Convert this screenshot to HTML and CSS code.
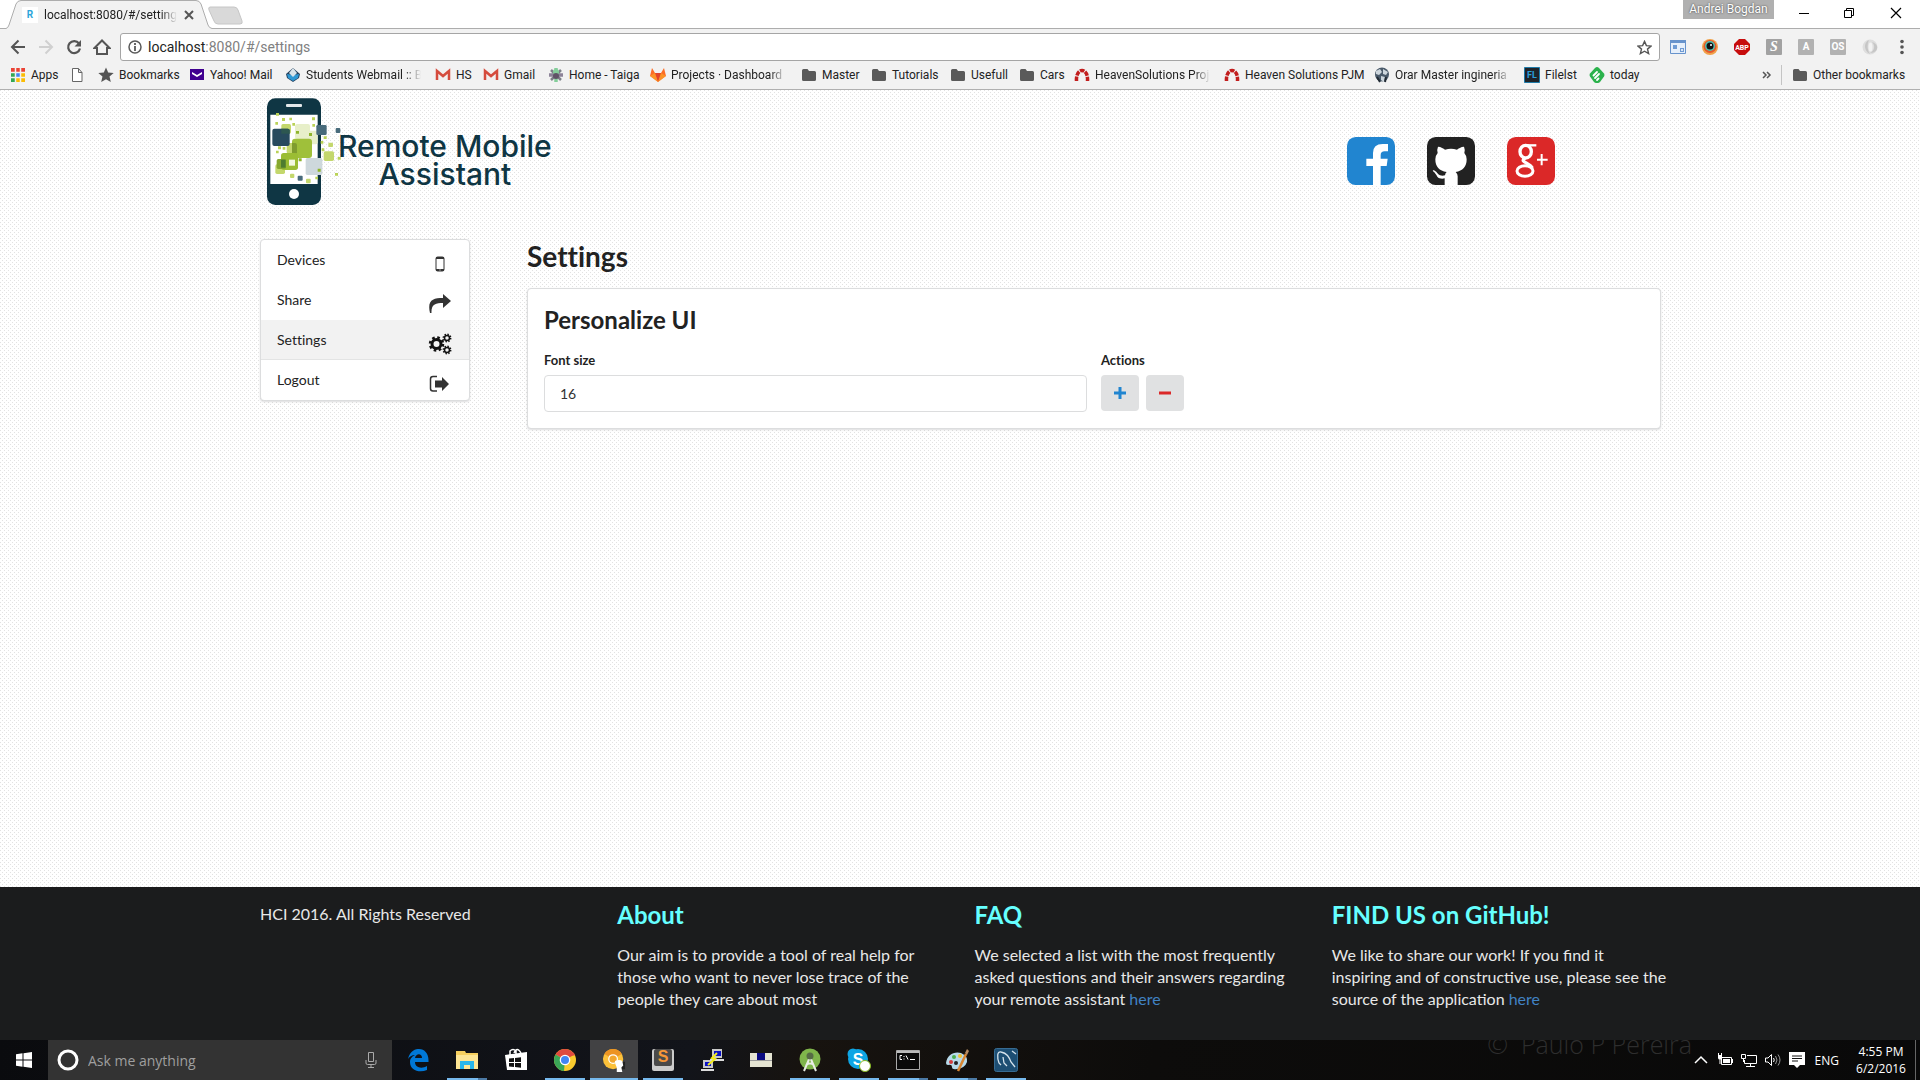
FILE: index.html
```html
<!DOCTYPE html>
<html lang="en">
<head>
<meta charset="utf-8">
<title>Remote Mobile Assistant - Settings</title>
<link rel="stylesheet" href="styles.css">
</head>
<body>
<svg class="sprite" aria-hidden="true">
  <symbol id="folder" viewBox="0 0 16 16"><path d="M1 3.500q0-1.500 1.500-1.500h4l1.500 2h5.500q1.500 0 1.500 1.500v7q0 1.500-1.500 1.500h-11q-1.500 0-1.500-1.500z" fill="#5a5a5a"/></symbol>
  <symbol id="gmail" viewBox="0 0 16 16"><path d="M2 3h12v10H2z" fill="#f2efef"/><path d="M2 13V4l6 5 6-5v9" fill="none" stroke="#d54b3d" stroke-width="2.500"/></symbol>
  <symbol id="redmine" viewBox="0 0 16 16"><path d="M2.500 14c-1-14 12-14 11 0" fill="none" stroke="#c21d1d" stroke-width="3.500" stroke-dasharray="4.500 1"/></symbol>
</svg>

<header class="browser">
  <div class="tabstrip">
    <div class="tab">
      <svg class="tab-shape" viewBox="0 0 206 29" aria-hidden="true"><path d="M0 28.500Q2 28 3 25L10 4Q11.500 .500 15 .500H190Q193.500 .500 195 4L202 25Q203 28 206 28.500V29H0z" fill="#f2f2f2"/><path d="M0 28.500Q2 28 3 25L10 4Q11.500 .500 15 .500H190Q193.500 .500 195 4L202 25Q203 28 206 28.500" fill="none" stroke="#adadad"/></svg>
      <span class="favicon">R</span>
      <span class="tab-title fade">localhost:8080/#/settings</span>
      <button class="tab-close" aria-label="Close tab"><svg width="10" height="10" viewBox="0 0 10 10"><path d="M1 1l8 8M9 1L1 9" stroke="#555" stroke-width="2"/></svg></button>
    </div>
    <button class="new-tab" aria-label="New tab"><svg width="35" height="19" viewBox="0 0 35 19"><path d="M2 1H26Q29 1 30 4L34 15Q35 18 32 18H10Q7 18 6 15L1 4Q0 1 2 1z" fill="#d9d9d9" stroke="#c6c6c6"/></svg></button>
    <div class="window-controls">
      <span class="profile">Andrei Bogdan</span>
      <button aria-label="Minimize"><svg width="12" height="12" viewBox="0 0 12 12"><path d="M1 6.500h10" stroke="#000"/></svg></button>
      <button aria-label="Restore"><svg width="12" height="12" viewBox="0 0 12 12" fill="none" stroke="#000"><path d="M1.500 3.500h7v7h-7zM3.500 3V1.500h7v7H9"/></svg></button>
      <button aria-label="Close"><svg width="12" height="12" viewBox="0 0 12 12"><path d="M1 1l10 10M11 1L1 11" stroke="#000" stroke-width="1.200"/></svg></button>
    </div>
  </div>

  <div class="toolbar">
    <button aria-label="Back"><svg width="16" height="16" viewBox="0 0 16 16" fill="none" stroke="#555" stroke-width="2"><path d="M15 8H3M8.500 1.500L2 8l6.500 6.500"/></svg></button>
    <button aria-label="Forward"><svg width="16" height="16" viewBox="0 0 16 16" fill="none" stroke="#d0d0d0" stroke-width="2"><path d="M1 8h12M7.500 1.500L14 8l-6.500 6.500"/></svg></button>
    <button aria-label="Reload"><svg width="16" height="16" viewBox="0 0 16 16"><path d="M13 4.500A6 6 0 1 0 14 9.500" fill="none" stroke="#555" stroke-width="2.200"/><path d="M15 1v6.500H8.500z" fill="#555"/></svg></button>
    <button aria-label="Home"><svg width="18" height="16" viewBox="0 0 18 16"><path d="M1.500 9L9 1.500 16.500 9H14v6H4V9z" fill="none" stroke="#555" stroke-width="2"/></svg></button>
    <div class="omnibox">
      <svg width="14" height="14" viewBox="0 0 14 14" aria-hidden="true"><circle cx="7" cy="7" r="6" fill="none" stroke="#5a5a5a" stroke-width="1.500"/><path d="M7 6v5M7 3v2" stroke="#5a5a5a" stroke-width="1.800"/></svg>
      <span class="url">localhost<span class="path">:8080/#/settings</span></span>
      <button aria-label="Bookmark this page"><svg width="15" height="15" viewBox="0 0 16 16"><path d="M8 1.500l2 4.500 5 .500-3.800 3.200 1.200 4.800L8 12l-4.400 2.500 1.200-4.800L1 6.500 6 6z" fill="none" stroke="#555" stroke-width="1.500"/></svg></button>
    </div>
    <div class="extensions">
      <button aria-label="Translate"><svg width="16" height="16" viewBox="0 0 16 16"><path d="M.5 1.500h15v13H.5z" fill="#e6effa" stroke="#6793cc"/><path d="M0 1h16v3H0z" fill="#6793cc"/><path d="M3 6h4v4H3zM10 9h4v4h-4z" fill="#6f9bd4"/><circle cx="12" cy="11" r="1" fill="#fff"/></svg></button>
      <button aria-label="Colour picker"><svg width="16" height="16" viewBox="0 0 16 16"><circle cx="8" cy="8" r="8" fill="#f0a24a"/><circle cx="8" cy="7.500" r="6.500" fill="#e4572e"/><circle cx="8" cy="7" r="5" fill="#4fc1b0"/><circle cx="8" cy="7" r="3.500" fill="#111"/><circle cx="9" cy="6" r="1" fill="#fff"/></svg></button>
      <button aria-label="Adblock Plus"><svg width="16" height="16" viewBox="0 0 16 16"><path d="M5 0h6l5 5v6l-5 5H5l-5-5V5z" fill="#c70d0d"/><text x="8" y="11" text-anchor="middle" class="abp">ABP</text></svg></button>
      <button aria-label="Stylish"><span class="ext script">S</span></button>
      <button aria-label="Angular"><span class="ext">A</span></button>
      <button aria-label="Last.fm"><span class="ext">OS</span></button>
      <button aria-label="Sync"><svg width="16" height="16" viewBox="0 0 16 16"><circle cx="8" cy="8" r="7.500" fill="#dedede"/><path d="M7 1C1 4 2 12 8 15 5 10 5 6 7 1zM10 3c4 4 2 9-2 11 5 0 8-3 7-7-1-2-2-3-5-4z" fill="#c6c6c6"/><ellipse cx="8.500" cy="8" rx="2" ry="4.500" fill="#f2f2f2"/></svg></button>
      <button aria-label="Menu"><svg width="16" height="16" viewBox="0 0 16 16" fill="#555"><circle cx="8" cy="2.500" r="1.800"/><circle cx="8" cy="8" r="1.800"/><circle cx="8" cy="13.500" r="1.800"/></svg></button>
    </div>
  </div>

  <nav class="bookmarks" aria-label="Bookmarks">
    <a href="#"><svg viewBox="0 0 16 16"><path d="M1 1h4v4H1zM6 1h4v4H6zM11 1h4v4h-4z" fill="#ea4335"/><path d="M1 6h4v4H1zM1 11h4v4H1z" fill="#34a853"/><path d="M6 6h4v4H6z" fill="#4285f4"/><path d="M11 6h4v4h-4zM6 11h4v4H6zM11 11h4v4h-4z" fill="#fbbc05"/><path d="M5.500 0v16M10.500 0v16M0 5.500h16M0 10.500h16" stroke="#f2f2f2" stroke-width="1.500"/></svg><span>Apps</span></a>
    <a href="#" aria-label="Page"><svg viewBox="0 0 16 16"><path d="M1.500 1.500h6l3.500 4v9H1.500zM7.500 1.500v4H11" fill="#fff" stroke="#666"/></svg></a>
    <a href="#"><svg viewBox="0 0 16 16"><path d="M8 .500l2.200 5 5.500.500-4.200 3.600 1.300 5.400L8 12.200 3.200 15l1.300-5.400L.3 6l5.500-.500z" fill="#555"/></svg><span>Bookmarks</span></a>
    <a href="#"><svg viewBox="0 0 16 16"><path d="M1 2h14v11H1z" fill="#400090"/><path d="M3 5l5 3 5-3v2l-5 3-5-3z" fill="#fff"/></svg><span>Yahoo! Mail</span></a>
    <a href="#"><svg viewBox="0 0 16 16"><path d="M8 1l7 6-1 4-6 4-6-4-1-4z" fill="#24415e"/><path d="M8 8l6-1-1 4-5 3-5-3-1-4z" fill="#2f98d4"/><path d="M8 1l4 5-4 4-4-4z" fill="#d9e4ea"/></svg><span class="fade">Students Webmail :: Bine</span></a>
    <a href="#"><svg><use href="#gmail"/></svg><span>HS</span></a>
    <a href="#"><svg><use href="#gmail"/></svg><span>Gmail</span></a>
    <a href="#"><svg viewBox="0 0 16 16"><g stroke-width="3.500"><path d="M8 1v14" stroke="#84ce9a"/><path d="M1 8h14" stroke="#8d8398"/><path d="M3 3l10 10M13 3L3 13" stroke="#7d8088" stroke-width="2.500"/></g><circle cx="8" cy="5" r="3" fill="#84ce9a"/><circle cx="8" cy="9" r="3" fill="#605367"/></svg><span>Home - Taiga</span></a>
    <a href="#"><svg viewBox="0 0 16 16"><path d="M0 9L2 1l3 5h6l3-5 2 8-8 6z" fill="#fc6d26"/><path d="M5 6h6l-3 9z" fill="#e24329"/><path d="M0 9l5-3 3 9zM16 9l-5-3-3 9z" fill="#fca326" opacity=".7"/></svg><span class="fade">Projects · Dashboard · G</span></a>
    <a href="#"><svg><use href="#folder"/></svg><span>Master</span></a>
    <a href="#"><svg><use href="#folder"/></svg><span>Tutorials</span></a>
    <a href="#"><svg><use href="#folder"/></svg><span>Usefull</span></a>
    <a href="#"><svg><use href="#folder"/></svg><span>Cars</span></a>
    <a href="#"><svg><use href="#redmine"/></svg><span class="fade">HeavenSolutions Project</span></a>
    <a href="#"><svg><use href="#redmine"/></svg><span>Heaven Solutions PJM</span></a>
    <a href="#"><svg viewBox="0 0 16 16"><circle cx="8" cy="7.500" r="7" fill="#4a5a6a"/><path d="M2 4l4-2 2 3-3 3-3-1zM9 2l5 3-2 3-3-1zM7 9l4 1-1 5-3-2z" fill="#cdd6dd"/><path d="M3 10l3 5M12 10l-1 5" stroke="#222b35" stroke-width="2"/></svg><span class="fade">Orar Master ingineria s</span></a>
    <a href="#"><svg viewBox="0 0 16 16"><path d="M.5.500h15v15H.500z" fill="#1f2328" stroke="#1e7aa8"/><text x="8" y="11" text-anchor="middle" class="fl">FL</text></svg><span>Filelst</span></a>
    <a href="#"><svg viewBox="0 0 16 16"><path d="M8 0q1 0 2 1l5 5.500q1 1.500 0 3L11 15q-1 1-2 1H7q-1 0-2-1L1 9.500q-1-1.500 0-3L6 1q1-1 2-1z" fill="#2bb24c"/><path d="M4.500 8.500L8 5M6 11l4-4M8 13l1.500-1.500" stroke="#fff" stroke-width="1.800" stroke-linecap="round"/></svg><span>today</span></a>
    <button class="more" aria-label="More bookmarks"><svg viewBox="0 0 16 16"><path d="M4 5l3 3-3 3M8 5l3 3-3 3" fill="none" stroke="#555" stroke-width="1.500"/></svg></button>
    <a href="#" class="other"><svg><use href="#folder"/></svg><span>Other bookmarks</span></a>
  </nav>
</header>

<main class="page">
  <div class="container masthead">
    <a href="#" class="logo">
      <svg width="80" height="109" viewBox="45 36 240 327" aria-hidden="true">
        <rect x="51" y="40" width="162" height="320" rx="25" fill="#0f3644"/>
        <path d="M61 89h142v208H61z" fill="#fff"/>
        <rect x="108" y="57" width="48" height="9" rx="3" fill="#e3e8ea"/>
        <circle cx="132" cy="327" r="15" fill="#fff"/>
        <g fill="#c3d76c"><rect x="94" y="117" width="29" height="29" rx="5"/><rect x="76" y="238" width="29" height="29" rx="5"/><rect x="221" y="199" width="31" height="29" rx="5"/><rect x="110" y="174" width="30" height="32" rx="5"/><rect x="120" y="266" width="13" height="13" rx="3"/><rect x="168" y="281" width="14" height="14" rx="3"/><rect x="235" y="173" width="14" height="13" rx="3"/></g>
        <g fill="#e7efc9"><rect x="135" y="117" width="45" height="45" rx="6"/><rect x="163" y="137" width="40" height="41" rx="6"/></g>
        <rect x="126" y="161" width="60" height="58" rx="9" fill="#9fc03a"/>
        <path d="M126 174h9q6 0 6 6v25q-8 0-15 8z" fill="#7f9c2f"/>
        <rect x="93" y="204" width="51" height="51" rx="8" fill="#9bbd33"/>
        <rect x="80" y="222" width="28" height="30" rx="5" fill="#86a82f"/><path d="M93 224h14v24H93z" fill="#4d7c2f"/>
        <rect x="117" y="224" width="18" height="18" fill="#f3f8e0"/>
        <rect x="67" y="131" width="52" height="52" rx="6" fill="#274a5d"/><path d="M94 131h20q5 0 5 5v10H94z" fill="#2d5750"/>
        <rect x="199" y="120" width="31" height="30" rx="4" fill="#486b7b"/><rect x="257" y="129" width="14" height="15" rx="3" fill="#486b7b"/><rect x="143" y="272" width="15" height="15" rx="3" fill="#486b7b"/>
        <rect x="167" y="219" width="50" height="51" rx="5" fill="#ced8dc"/>
        <path d="M78 84h9v8h-9zM96 99h9v9h-9zM118 98h8v8h-8zM186 97h9v9h-9zM76 111h8v8h-8zM127 114h8v8h-8zM187 117h8v8h-8zM84 184h9v9h-9zM98 186h8v8h-8zM78 197h8v8h-8zM221 154h9v8h-9zM212 168h8v8h-8zM215 190h8v9h-8zM263 216h9v8h-9zM255 264h9v8h-9zM196 275h8v8h-8z" fill="#bad257"/>
        <path d="M138 138h9v8h-9zM177 144h9v9h-9zM146 220h9v9h-9zM203 251h9v9h-9z" fill="#8fb52c"/>
      </svg>
      <span class="logo-name">Remote Mobile<br>Assistant</span>
    </a>
    <div class="social">
      <a href="#" aria-label="Facebook"><svg viewBox="0 0 144 144"><rect width="144" height="144" rx="26" fill="#2185d0"/><path d="M78 144V87H58V65h20V48q0-27 29-27h16v22h-10q-12 0-12 11v11h21l-3 22h-18v57z" fill="#fff"/></svg></a>
      <a href="#" aria-label="GitHub"><svg viewBox="0 0 144 144"><rect width="144" height="144" rx="26" fill="#222"/><path d="M53 144v-20c-8 2-17 1-22-5-4-6-7-12-13-16-2-3 2-4 5-2 7 3 10 12 16 14 5 2 10 2 15 0q1-7 5-10c-22-3-34-15-34-38q0-11 7-19-3-10 1-19c9 0 17 6 21 9q18-5 36 0c4-3 12-9 21-9q4 9 1 19 7 8 7 19c0 23-12 35-33 38q6 5 6 13v26z" fill="#fff"/></svg></a>
      <a href="#" aria-label="Google Plus"><svg viewBox="0 0 144 144"><rect width="144" height="144" rx="26" fill="#db2828"/><g fill="none" stroke="#fff"><ellipse cx="56" cy="44" rx="17" ry="19" stroke-width="10"/><ellipse cx="54" cy="102" rx="24" ry="16" stroke-width="9"/><path d="M60 25h28" stroke-width="7"/><path d="M54 63c-18 12 14 14 22 30" stroke-width="10"/><path d="M104 51v34M90 68h32" stroke-width="6"/></g></svg></a>
    </div>
  </div>

  <div class="container layout">
    <nav class="side-menu" aria-label="Main">
      <a href="#"><span>Devices</span><svg viewBox="0 0 24 24"><rect x="8" y="5" width="8" height="14" rx="1.500" fill="#fff" stroke="#333"/><path d="M8 5h8v2H8zM8 17h8v2H8z" fill="#333"/><path d="M11.500 17.500h1v1h-1z" fill="#fff"/></svg></a>
      <a href="#"><span>Share</span><svg viewBox="0 0 24 24"><path d="M2 21c-3-13 3-15 13-15V2l8 7-8 7v-5C8 11 3 12 3.500 21z" fill="#333"/></svg></a>
      <a href="#" class="active"><span>Settings</span><svg viewBox="0 0 24 24" fill="none" stroke="#111"><circle cx="8.500" cy="12" r="4.500" stroke-width="3"/><circle cx="8.500" cy="12" r="6.500" stroke-width="2.500" stroke-dasharray="2.550 2.550"/><g stroke-width="1.500"><circle cx="19" cy="6" r="2.500"/><circle cx="19" cy="18" r="2.500"/><g stroke-dasharray="1.450 1.450"><circle cx="19" cy="6" r="3.700"/><circle cx="19" cy="18" r="3.700"/></g></g></svg></a>
      <a href="#"><span>Logout</span><svg viewBox="0 0 24 24"><path d="M9 4.500H5Q2.500 4.500 2.500 7v9.500Q2.500 19 5 19h4" fill="none" stroke="#333" stroke-width="1.500"/><path d="M7 8.500h7V5l7 7-7 7v-3.500H7z" fill="#333"/></svg></a>
    </nav>
    <section class="content">
      <h1>Settings</h1>
      <form class="segment">
        <h2>Personalize UI</h2>
        <div class="fields">
          <div class="field">
            <label for="font-size">Font size</label>
            <input id="font-size" type="text" value="16">
          </div>
          <div class="field" role="group" aria-labelledby="actions-label">
            <span class="label" id="actions-label">Actions</span>
            <div class="actions">
              <button type="button" aria-label="Increase font size"><svg width="12" height="12" viewBox="0 0 12 12"><path d="M6 0v12M0 6h12" stroke="#2185d0" stroke-width="3"/></svg></button>
              <button type="button" aria-label="Decrease font size"><svg width="12" height="12" viewBox="0 0 12 12"><path d="M0 6h12" stroke="#db2828" stroke-width="3"/></svg></button>
            </div>
          </div>
        </div>
      </form>
    </section>
  </div>
</main>

<footer class="site-footer">
  <div class="footer-grid">
    <p class="copyright">HCI 2016. All Rights Reserved</p>
    <div><h3>About</h3><p>Our aim is to provide a tool of real help for those who want to never lose trace of the people they care about most</p></div>
    <div><h3>FAQ</h3><p>We selected a list with the most frequently asked questions and their answers regarding your remote assistant <a href="#">here</a></p></div>
    <div><h3>FIND US on GitHub!</h3><p>We like to share our work! If you find it inspiring&nbsp;and of constructive use, please see the source of the application <a href="#">here</a></p></div>
  </div>
</footer>

<div class="taskbar">
  <span class="watermark" aria-hidden="true">©&nbsp; Paulo P Pereira</span>
  <button class="start" aria-label="Start"><svg width="16" height="16" viewBox="0 0 16 16" fill="#fff"><path d="M0 2.300L6.500 1.300V7.500H0zM7.500 1.200L16 0v7.500H7.500zM0 8.500h6.500v6.200L0 13.700zM7.500 8.500H16V16l-8.500-1.200z"/></svg></button>
  <label class="search">
    <svg width="22" height="22" viewBox="0 0 22 22" aria-hidden="true"><circle cx="11" cy="11" r="9" fill="none" stroke="#fff" stroke-width="3"/></svg>
    <input type="text" placeholder="Ask me anything" aria-label="Ask me anything">
    <svg width="12" height="18" viewBox="0 0 12 18" aria-hidden="true"><path d="M3.500 1.500h5v9h-5zM1 9v3q0 1.500 1.500 1.500h7Q11 13.500 11 12V9M6 13.500V17M3 16.500h6" fill="none" stroke="#aaa"/></svg>
  </label>
  <div class="apps">
    <button aria-label="Edge"><svg viewBox="0 0 24 24"><path d="M2 11C4 2 10 1 13 1c6 0 10 5 9.500 13H9c0 6 7 7 12 4v4c-7 3-17 1-17-8 0-4 3-6 5-7-3 0-6 2-7 4zm7-1h7c0-5-6-5-7 0z" fill="#0078d7"/></svg></button>
    <button class="open stack" aria-label="File Explorer"><svg viewBox="0 0 24 24"><path d="M1 3h9l1 2h12v16H1z" fill="#f6cf5e"/><path d="M1 7h22v14H1z" fill="#fde594"/><path d="M5 21v-8h14v8h-4v-4H9v4z" fill="#29b6ea"/></svg></button>
    <button aria-label="Store"><svg viewBox="0 0 24 24"><path d="M1 7l22-3v18L3 22z" fill="#fff"/><path d="M6 7V3q3-3 6 0v3M10 5q3-7 7 0" fill="none" stroke="#fff" stroke-width="1.500"/><path d="M5 10.500l5-.500v4H5zM11 9.900l6-.700V14h-6zM5 15h5v4l-5-.500zM11 15h6v4.700l-6-.600z" fill="#111"/></svg></button>
    <button class="open" aria-label="Chrome"><svg viewBox="0 0 24 24"><circle cx="12" cy="12" r="11" fill="#f9cb2e"/><path d="M12 12L2.500 6.500a11 11 0 0 1 19 0z" fill="#e04a3f"/><path d="M12 12L2.500 6.500A11 11 0 0 0 11 23z" fill="#3aa757"/><path d="M12 6.500h9.500" stroke="#e04a3f" stroke-width="2"/><circle cx="12" cy="12" r="5.300" fill="#fff"/><circle cx="12" cy="12" r="4" fill="#4285f4"/></svg></button>
    <button class="open current" aria-label="Chrome Canary"><svg viewBox="0 0 26 26"><circle cx="12" cy="12" r="11" fill="#fcc13a"/><path d="M12 12L2.500 6.500a11 11 0 0 1 19 0z" fill="#ed9422"/><circle cx="12" cy="12" r="5.300" fill="#fff"/><circle cx="12" cy="12" r="4" fill="#f2a72e"/><path d="M19 15h6v8h-5z" fill="#222"/><path d="M14 14q5-2 8 0l1 5-2 2 1 5h-6v-5q-2-3-2-7z" fill="#fff"/></svg></button>
    <button class="open" aria-label="Sublime Text"><svg viewBox="0 0 24 24"><rect x="1" y="1" width="22" height="22" rx="2" fill="#ccc"/><rect x="3" y="1" width="18" height="17" rx="2" fill="#4a4a4a"/><text x="12" y="14" text-anchor="middle" class="glyph orange">S</text></svg></button>
    <button aria-label="PuTTY"><svg viewBox="0 0 24 24"><path d="M12 1h10v9H12zM3 12h10v8H3z" fill="#c9c9c9"/><path d="M14 3h7v5h-7zM5 14h6v4H5z" fill="#0a12c8"/><path d="M10 11h14v2H10zM1 21h13v2H1z" fill="#ddd"/><path d="M17 5l-5 5 3 1-7 6" fill="none" stroke="#f4ec19" stroke-width="2"/></svg></button>
    <button aria-label="Archive"><svg viewBox="0 0 24 24"><path d="M1 5h22v14H1z" fill="#e5e4d2"/><path d="M1 12.500h22" stroke="#999"/><path d="M8 5h8v7H8z" fill="#0a0a80"/></svg></button>
    <button class="open" aria-label="Android Studio"><svg viewBox="0 0 24 24"><circle cx="12" cy="11" r="10.500" fill="#7fb54b"/><path d="M12 9L6 23M12 9l6 14M8 17q4-3 8 0" fill="none" stroke="#e9eee5" stroke-width="2"/><circle cx="12" cy="8" r="3.500" fill="#566b45"/></svg></button>
    <button class="open" aria-label="Skype"><svg viewBox="0 0 24 24"><circle cx="11" cy="11" r="10" fill="#0ea5e4"/><circle cx="6" cy="6" r="5.500" fill="#0ea5e4"/><text x="11" y="17" text-anchor="middle" class="glyph white">S</text><circle cx="18" cy="18" r="5.500" fill="#fff" stroke="#86b81f"/></svg></button>
    <button class="open stack" aria-label="Command Prompt"><svg viewBox="0 0 24 24"><path d="M.5 2.500h23v19H.500z" fill="#0a0a0a" stroke="#aaa"/><path d="M1 3h22v2H1z" fill="#bbb"/><path d="M6 7.500H4v4h2M8 8v1M8 10.500v1M10 7.500l2 4M14 11.500h5" fill="none" stroke="#fff"/></svg></button>
    <button class="open stack" aria-label="Paint"><svg viewBox="0 0 24 24"><path d="M1 15C2 7 9 3 16 5q7 3 6 9-2 6-10 7-5 1-5-2t-4-2q-2 0-2-2z" fill="#b7d9e9"/><circle cx="6" cy="14" r="2" fill="#d43b3b"/><circle cx="9" cy="9" r="2" fill="#4caf50"/><circle cx="15" cy="8" r="2" fill="#f2c230"/><circle cx="11" cy="15" r="2" fill="#222"/><path d="M13 23L21 6" stroke="#d98632" stroke-width="2.500"/><path d="M20 5l2-4 2 2-2 4z" fill="#b58a63"/></svg></button>
    <button class="open" aria-label="MySQL Workbench"><svg viewBox="0 0 24 24"><rect x=".5" y=".5" width="23" height="23" rx="2" fill="#1d4e73" stroke="#376c93"/><path d="M7 17l-2-2C3 9 3 3 7 4c6 1 8 5 10 10l4 5M9 9l1 6 3 3M18 3l4 3" fill="none" stroke="#d6e3ec" stroke-width="1.300"/></svg></button>
  </div>
  <div class="tray">
    <svg viewBox="0 0 16 16"><path d="M2 11l6-6 6 6" fill="none" stroke="#fff" stroke-width="1.500"/></svg>
    <svg viewBox="0 0 16 16"><path d="M4.500 5.500h10v7h-10z" fill="none" stroke="#fff"/><path d="M6 7h7v4H6zM15 7h1v4h-1zM1 3h4v3q0 1.500-2 1.500T1 6zM1 1h1v2H1zM4 1h1v2H4zM2.500 7h1v5h-1z" fill="#fff"/></svg>
    <svg viewBox="0 0 16 16"><path d="M6 3.500h9.500v8H3.500V8M9.500 12v2.500M5 14.500h9M.5 2.500h4v4h-4zM2.500 7v3" fill="none" stroke="#fff"/></svg>
    <svg viewBox="0 0 16 16"><path d="M.5 6h2.500l3.500-3.500v11L3 10H.500zM8.500 6q1.500 2 0 4" fill="none" stroke="#fff"/><path d="M10.500 4q3 4 0 8M13 2.500q4 5.500 0 11" fill="none" stroke="#999"/></svg>
    <svg viewBox="0 0 16 16"><path d="M0 0h16v13h-5l-3 3-3-3H0z" fill="#fff"/><path d="M3 4h10M3 6.500h10M3 9h6" stroke="#111"/></svg>
    <span class="language">ENG</span>
    <div class="clock"><time>4:55 PM</time><time>6/2/2016</time></div>
    <span class="show-desktop"></span>
  </div>
</div>
</body>
</html>
```

FILE: styles.css
```css
* { box-sizing: border-box; }

body {
  margin: 0;
  min-height: 100vh;
  display: flex;
  flex-direction: column;
  font-family: Lato, sans-serif;
  font-size: 14px;
  color: #222;
}

h1, h2, h3, p { margin: 0; }
a { color: inherit; text-decoration: none; }
button { font: inherit; border: 0; padding: 0; background: none; }
svg { display: block; flex: none; }
.sprite { position: absolute; width: 0; height: 0; }

/* browser window */
.browser {
  background: #f2f2f2;
  border-bottom: 1px solid #b0b0b0;
  font-family: Roboto, "Liberation Sans", sans-serif;
  font-size: 12px;
}

.fade {
  overflow: hidden;
  -webkit-mask-image: linear-gradient(to left, transparent, #000 16px);
  mask-image: linear-gradient(to left, transparent, #000 16px);
}

.tabstrip {
  display: flex;
  height: 29px;
  padding-left: 6px;
  background: linear-gradient(#adadad, #adadad) bottom / 100% 1px no-repeat #fff;
}

.tab {
  position: relative;
  display: flex;
  align-items: center;
  width: 206px;
  padding: 0 18px 0 16px;
}
.tab-shape { position: absolute; left: 0; top: 0; width: 206px; height: 29px; }
.favicon, .tab-title, .tab-close { position: relative; }
.favicon {
  width: 16px;
  line-height: 16px;
  margin-right: 6px;
  background: #fff;
  color: #2da5da;
  font-size: 10px;
  font-weight: 700;
  text-align: center;
}
.tab-title { width: 133px; white-space: nowrap; }
.tab-close { margin-left: auto; }
.new-tab { margin: 2px 0 0 -4px; display: flex; align-items: flex-start; padding-top: 4px; }

.window-controls { display: flex; margin-left: auto; }
.window-controls button {
  width: 45px;
  height: 26px;
  display: grid;
  place-items: center;
}
.window-controls button:last-child { width: 49px; }
.profile {
  width: 91px;
  height: 19px;
  margin-right: 7px;
  line-height: 18px;
  background: #b0b0b0;
  color: #fff;
  text-align: center;
  text-shadow: 0 0 2px #333;
}

.toolbar { display: flex; align-items: center; height: 36px; padding: 0 2px 0 4px; }
.toolbar > button { width: 28px; height: 28px; display: grid; place-items: center; }
.omnibox {
  flex: 1;
  display: flex;
  align-items: center;
  height: 28px;
  margin-left: 4px;
  padding: 0 7px;
  border: 1px solid #a5a5a5;
  border-radius: 3px;
  background: #fff;
}
.url { flex: 1; margin-left: 6px; font-size: 14px; color: #222; }
.path { color: #808080; }
.extensions { display: flex; margin-left: 2px; }
.extensions button { width: 32px; height: 28px; display: grid; place-items: center; }
.ext {
  width: 16px;
  line-height: 16px;
  border-radius: 1px;
  background: #b2b2b2;
  color: #fff;
  font-size: 10px;
  font-weight: 700;
}
.script { font-family: "Liberation Serif", serif; font-size: 14px; font-style: italic; background: #a2a2a2; }
.abp { font: 700 7px Roboto, sans-serif; fill: #fff; }
.fl { font: 700 9px Roboto, sans-serif; fill: #2aa1db; }

.bookmarks {
  display: grid;
  grid-template-columns: 61px 27px 91px 96px 150px 48px 65px 102px 151px 70px 79px 69px 55px 150px 150px 150px 65px 60px 1fr 139px;
  height: 24px;
  padding: 0 0 4px 10px;
}
.bookmarks a { display: flex; align-items: center; gap: 5px; min-width: 0; white-space: nowrap; }
.bookmarks svg { width: 16px; height: 16px; }
.bookmarks a .fade { width: 115px; }
.more { justify-self: end; margin-right: 6px; }
.bookmarks .other { padding-left: 10px; border-left: 1px solid #c4c4c4; }

/* application page */
.page {
  flex: 1;
  background-color: #fff;
  background-image:
    conic-gradient(at 1px 1px, transparent 75%, #e2e2e2 0),
    conic-gradient(at 1px 1px, transparent 75%, #e2e2e2 0);
  background-size: 4px 4px;
  background-position: 0 0, 2px 2px;
}

.container { margin: 0 259px 0 260px; }

.masthead {
  display: flex;
  justify-content: space-between;
  padding: 7px 106px 0 5px;
}
.logo { display: flex; }
.logo-name {
  margin: 35px 0 0 -7px;
  font: 500 30px/28px Inter, sans-serif;
  color: #0f3644;
  text-align: center;
}
.social { display: flex; gap: 32px; padding-top: 40px; }
.social svg { width: 48px; height: 48px; }

.layout {
  display: flex;
  align-items: flex-start;
  gap: 57px;
  margin-top: 33px;
  font-variant-ligatures: none;
}

.side-menu {
  width: 210px;
  border: 1px solid #dcddde;
  border-radius: 4px;
  background: #fff;
  box-shadow: 0 1px 2px rgba(34, 36, 38, .15);
}
.side-menu a {
  display: flex;
  justify-content: space-between;
  height: 40px;
  padding: 8px 17px 0 16px;
}
.side-menu span { line-height: 24px; }
.side-menu svg { width: 24px; height: 24px; margin-top: 4px; }
.side-menu .active { background: #f2f2f2; border-bottom: 1px solid #e3e4e4; }

.content { flex: 1; }
h1 { font-size: 28px; line-height: 34px; }
.segment {
  margin-top: 15px;
  padding: 16px;
  border: 1px solid #dcddde;
  border-radius: 4px;
  background: #fff;
  box-shadow: 0 1px 2px rgba(34, 36, 38, .15);
}
h2 { font-size: 24px; line-height: 30px; }
.fields { display: flex; gap: 14px; margin-top: 15px; }
.field { flex: 1; }
.field label, .label {
  display: block;
  margin-bottom: 5px;
  font-size: 13px;
  line-height: 20px;
  font-weight: 700;
}
.field input {
  display: block;
  width: 100%;
  height: 37px;
  padding: 0 15px;
  border: 1px solid #dcddde;
  border-radius: 4px;
  font: inherit;
  color: #333;
}
.actions { display: flex; gap: 7px; }
.actions button {
  width: 38px;
  height: 36px;
  display: grid;
  place-items: center;
  border-radius: 4px;
  background: #e0e1e2;
}

.site-footer { padding: 10px 0 30px; background: #1b1c1d; color: #e8e8e8; }
.footer-grid {
  display: grid;
  grid-template-columns: repeat(4, 1fr);
  gap: 20px;
  margin: 0 251px 0 260px;
  font-size: 16px;
  line-height: 22px;
}
.copyright { margin-top: 6px; }
.footer-grid h3 { margin-bottom: 11px; font-size: 24px; line-height: 36px; color: #6ff; }
.footer-grid a { color: #4183c4; }

/* desktop taskbar */
.taskbar {
  position: relative;
  display: flex;
  height: 40px;
  overflow: hidden;
  background: linear-gradient(100deg, #0a0b0e, #12141a 36%, #17130f 42%, #0d0c0b 60%, #090909);
  color: #fff;
  font-family: "Open Sans", sans-serif;
  font-size: 12px;
}
.watermark {
  position: absolute;
  top: -12px;
  right: 228px;
  font: 300 25px/32px "Open Sans", sans-serif;
  color: #2e2e2e;
}
.start { width: 48px; display: grid; place-items: center; }
.search {
  display: flex;
  align-items: center;
  width: 344px;
  padding: 0 15px 0 9px;
  background: #333;
}
.search input {
  flex: 1;
  min-width: 0;
  padding: 0 9px;
  border: 0;
  background: none;
  color: #fff;
  font: 14px "Open Sans", sans-serif;
}
.search input::placeholder { color: #9f9f9f; }
.apps { display: flex; gap: 1px; margin-left: 2px; }
.apps button {
  width: 48px;
  display: grid;
  place-items: center;
  background: bottom / 40px 2px no-repeat;
}
.apps svg { width: 24px; height: 24px; }
.apps .open { background-image: linear-gradient(#76b9ed, #76b9ed); }
.apps .stack { background-image: linear-gradient(90deg, #76b9ed 31px, #4c7aa5 31px); }
.apps .current { background-color: #424244; background-size: 48px 2px; }
.glyph { font: 700 16px "Liberation Sans", sans-serif; }
.orange { fill: #f59638; }
.white { fill: #fff; }

.tray { position: relative; display: flex; align-items: center; gap: 8px; margin-left: auto; }
.tray svg { width: 16px; height: 16px; }
.language { margin-left: 2px; }
.clock { width: 68px; display: grid; text-align: center; line-height: 17px; }
.show-desktop { width: 5px; height: 40px; margin-left: -8px; border-left: 1px solid #666; }
```
